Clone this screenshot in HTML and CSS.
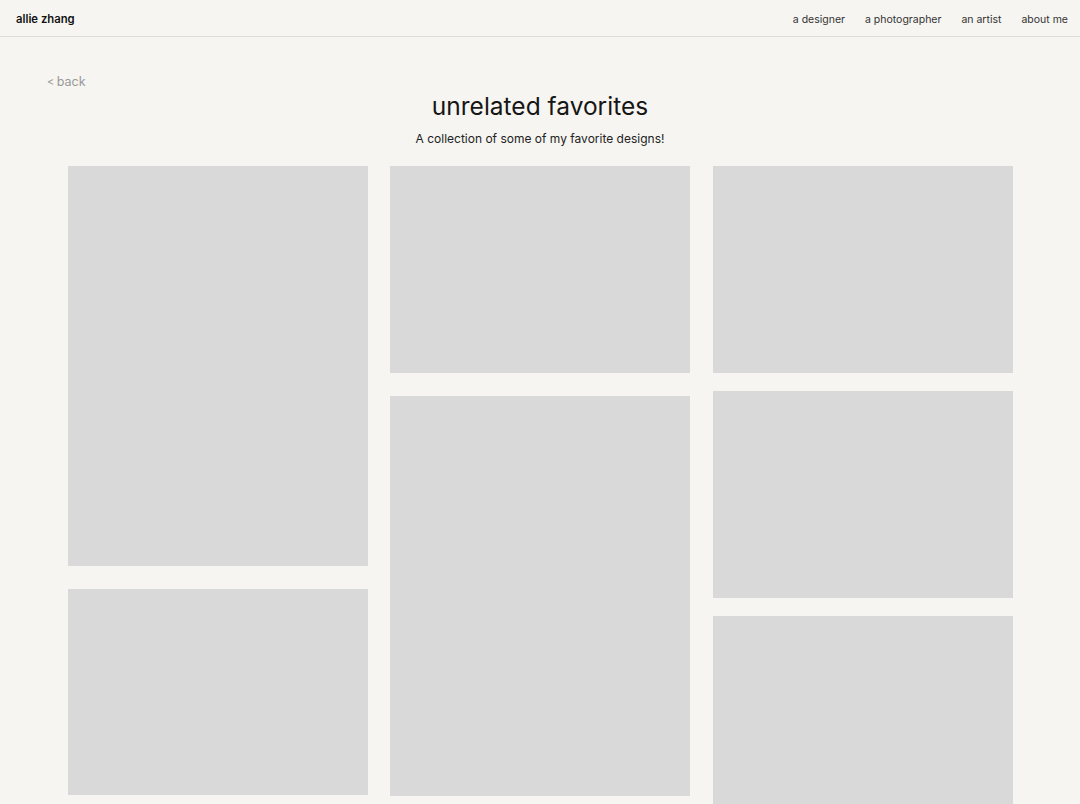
FILE: index.html
```html
<!DOCTYPE html>
<html lang="en">
<head>
    <meta charset="UTF-8">
    <meta name="viewport" content="width=device-width, initial-scale=1.0">
    <title>unrelated favorites - allie zhang</title>
    <link rel="stylesheet" href="styles.css">
</head>
<body>
    <header class="topbar">
        <a class="brand" href="#">allie zhang</a>
        <nav class="nav">
            <a href="#">a designer</a>
            <a href="#">a photographer</a>
            <a href="#">an artist</a>
            <a href="#">about me</a>
        </nav>
    </header>

    <main class="page">
        <a class="back" href="#"><span class="chev">&lt;</span> back</a>
        <h1 class="title">unrelated favorites</h1>
        <p class="subtitle">A collection of some of my favorite designs!</p>

        <div class="gallery">
            <!-- column 1 -->
            <div class="column">
                <div class="shot tall"></div>
                <div class="shot short"></div>
            </div>
            <!-- column 2 -->
            <div class="column">
                <div class="shot medium"></div>
                <div class="shot tall"></div>
            </div>
            <!-- column 3 -->
            <div class="column tight">
                <div class="shot medium"></div>
                <div class="shot medium"></div>
                <div class="shot medium"></div>
            </div>
        </div>
    </main>
</body>
</html>
```

FILE: styles.css
```css
body {
    margin: 0;
    font-family: Inter, "Noto Sans", Arial, sans-serif;
    background-color: #f6f5f1;
    color: #1a1a1a;
    overflow: hidden;
}
a {
    color: inherit;
    text-decoration: none;
}
.topbar {
    height: 34px;
    display: flex;
    align-items: center;
    justify-content: space-between;
    padding: 2px 12px 0 16px;
    border-bottom: 1px solid #dddcd8;
}
.brand {
    font-size: 11.3px;
    font-weight: 600;
    color: #111;
}
.nav {
    display: flex;
    gap: 20px;
    font-size: 10.5px;
    color: #333;
}
.page {
    padding-top: 37px;
}
.back {
    display: block;
    margin-left: 47px;
    font-size: 12.5px;
    line-height: 16px;
    color: #999;
}
.back .chev {
    font-size: 11px;
    margin-right: -1px;
}
.title {
    margin: 0;
    text-align: center;
    font-size: 24.5px;
    font-weight: 400;
    line-height: 32px;
    color: #161616;
}
.subtitle {
    margin: 9px 0 0;
    text-align: center;
    font-size: 12px;
    line-height: 16px;
    color: #222;
}
.gallery {
    display: flex;
    justify-content: center;
    gap: 22.5px;
    margin-top: 19px;
}
.column {
    width: 300px;
    display: flex;
    flex-direction: column;
    gap: 23px;
}
.column.tight {
    gap: 18px;
}
.shot {
    background-color: #d9d9d9;
}
.shot.tall {
    height: 400px;
}
.shot.medium {
    height: 207px;
}
.shot.short {
    height: 206px;
}
```
